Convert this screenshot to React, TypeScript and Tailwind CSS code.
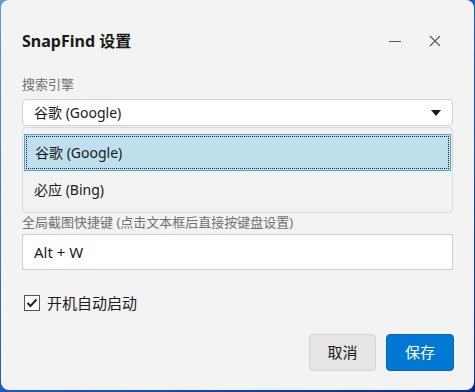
import React from "react";

export default function App() {
  const font = { fontFamily: '"Segoe UI", "Noto Sans", "Noto Sans CJK SC", sans-serif' };
  return (
    <div className="w-[475px] h-[392px] bg-gradient-to-br from-[#5b9be0] via-[#1a5cc4] to-[#0a2a8c] pl-px pr-px pb-[2px]" style={font}>
      <div className="w-[473px] h-[390px] bg-[#f3f3f3] rounded-[8px] flex flex-col px-[21px]">
        <div className="flex items-center h-[80px] pt-[2px]">
          <div className="text-[16px] font-bold text-[#1a1a1a] flex-1 leading-none">SnapFind 设置</div>
          <div className="flex items-center gap-[26px] mr-[11px]">
            <svg width="14" height="14" viewBox="0 0 14 14"><path d="M1 7.5h12" stroke="#555" strokeWidth="1" /></svg>
            <svg width="14" height="14" viewBox="0 0 14 14"><path d="M2 2l10 10M12 2L2 12" stroke="#555" strokeWidth="1.1" /></svg>
          </div>
        </div>
        <div className="text-[13px] text-[#707070] leading-[16px] -mt-[4px]">搜索引擎</div>
        <div className="mt-[7px] h-[27px] bg-white border border-[#d0d0d0] rounded-[4px] flex items-center pl-[11px] pr-[11px]">
          <span className="text-[14px] text-[#1a1a1a] flex-1">谷歌 (Google)</span>
          <svg width="10" height="6" viewBox="0 0 10 6"><path d="M0 0h10L5 6z" fill="#1a1a1a" /></svg>
        </div>
        <div className="mt-[1px] h-[86px] border border-[#d9d9d9] rounded-[4px] bg-[#f2f2f2] pt-[6px] px-0">
          <div className="h-[37px] bg-[#c0dfed] border border-[#4ba3df] mx-px p-px">
            <div className="h-full border border-dotted border-[#222] flex items-center pl-[8px]">
              <span className="text-[14px] text-[#1a1a1a]">谷歌 (Google)</span>
            </div>
          </div>
          <div className="h-[36px] flex items-center pl-[11px] text-[14px] text-[#1a1a1a]">必应 (Bing)</div>
        </div>
        <div className="text-[13px] text-[#707070] leading-[16px] mt-[1px]">全局截图快捷键 (点击文本框后直接按键盘设置)</div>
        <div className="mt-[4px] h-[36px] bg-white border border-[#cfcfcf] flex items-center pl-[11px] text-[15px] text-[#1a1a1a]">Alt + W</div>
        <div className="mt-[22px] flex items-center gap-[7px]">
          <div className="w-[16px] h-[16px] ml-[2px] border border-[#555] bg-white flex items-center justify-center">
            <svg width="12" height="10" viewBox="0 0 12 10"><path d="M1.5 5l3 3L10.5 1.5" stroke="#222" strokeWidth="2" fill="none" /></svg>
          </div>
          <span className="text-[15px] text-[#1a1a1a]">开机自动启动</span>
        </div>
        <div className="mt-auto mb-[19px] flex justify-end gap-[10px] mr-[-1px]">
          <button className="w-[67px] h-[37px] rounded-[4px] bg-[#e5e5e5] border border-[#d3d3d3] text-[15px] text-[#1a1a1a]">取消</button>
          <button className="w-[68px] h-[37px] rounded-[4px] bg-[#0078d4] border border-[#0a66b5] text-[15px] text-white">保存</button>
        </div>
      </div>
    </div>
  );
}
